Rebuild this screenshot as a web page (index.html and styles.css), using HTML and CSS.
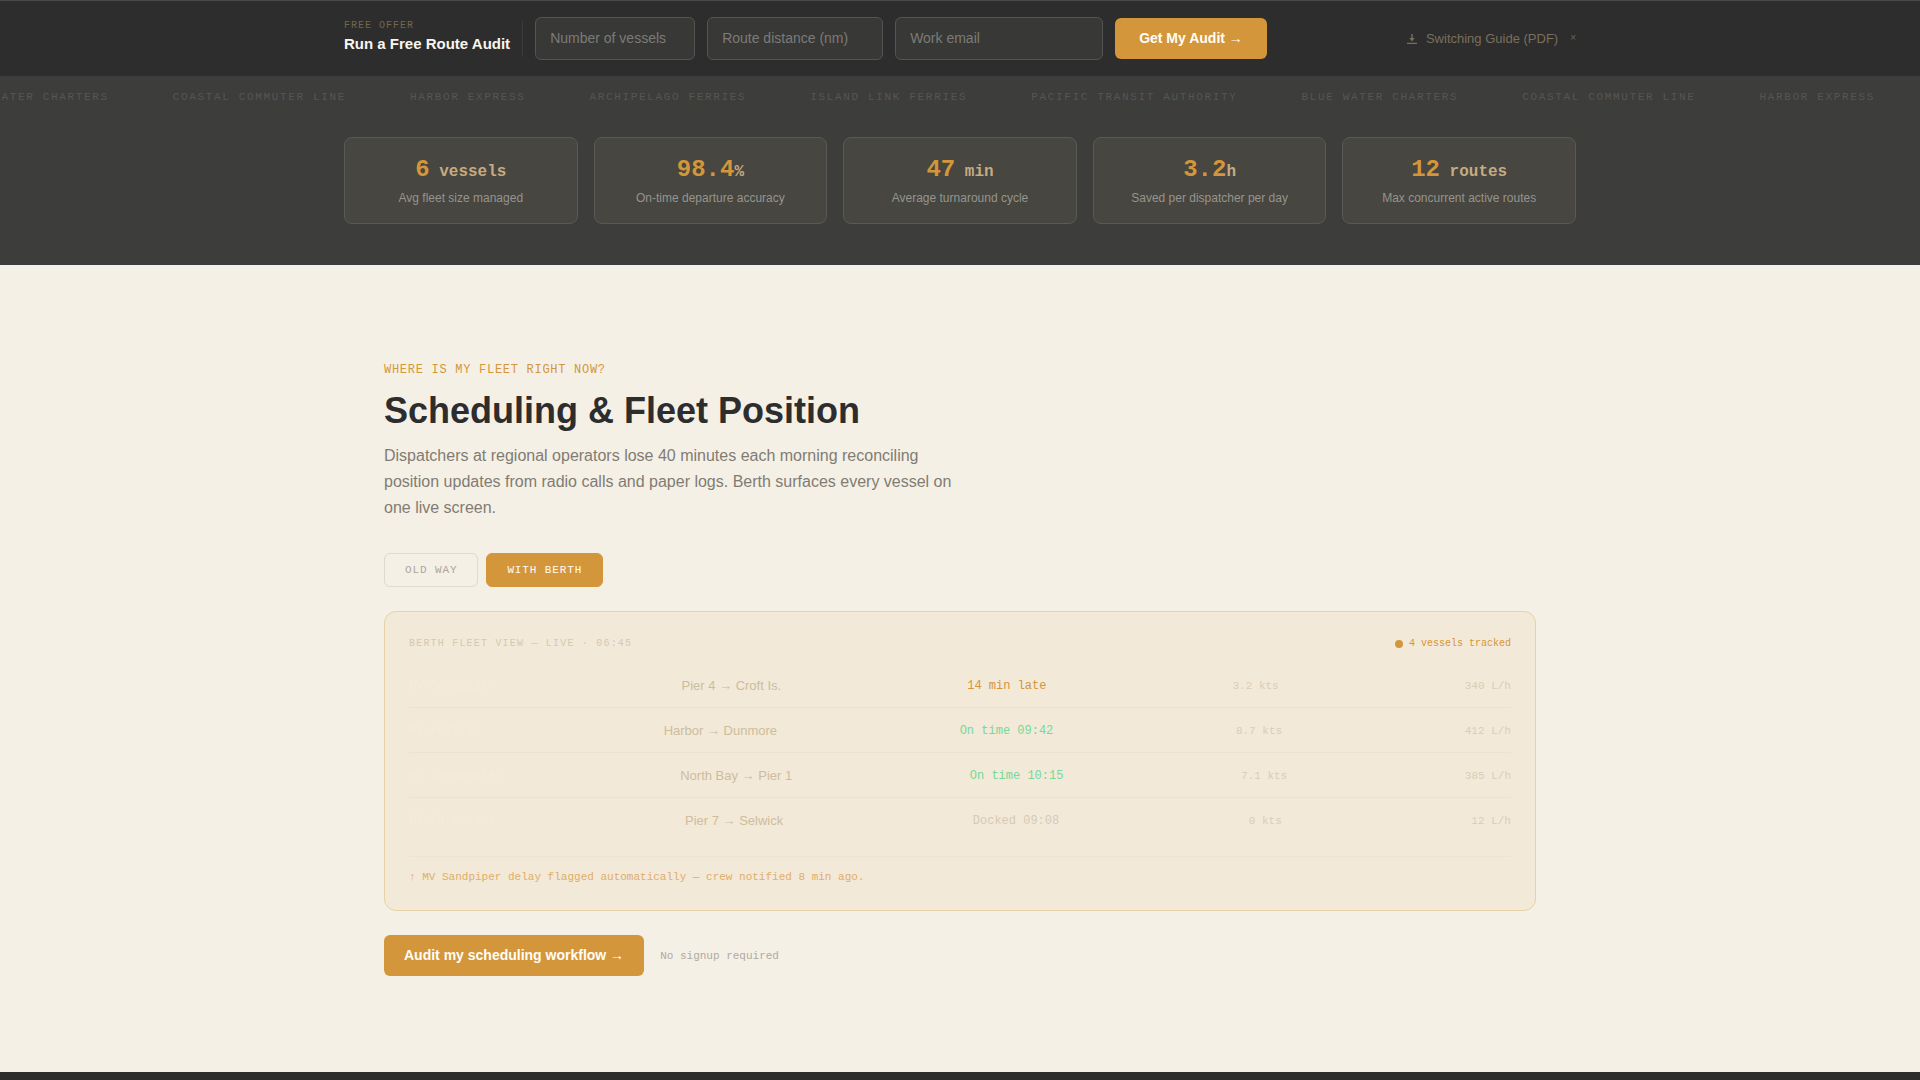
FILE: index.html
```html
<!DOCTYPE html>
<html lang="en">
<head>
  <meta charset="UTF-8">
  <title>Berth - Ferry Fleet Scheduling</title>
  <meta name="viewport" content="width=device-width, initial-scale=1.0">
  <link rel="stylesheet" href="styles.css">
</head>
<body>

  <div class="audit-bar">
    <div class="bar-inner">
      <div class="offer">
        <span class="offer-tag">FREE OFFER</span>
        <strong class="offer-title">Run a Free Route Audit</strong>
      </div>
      <form class="audit-form">
        <input class="vessels" type="text" placeholder="Number of vessels" aria-label="Number of vessels">
        <input class="distance" type="text" placeholder="Route distance (nm)" aria-label="Route distance (nm)">
        <input class="email" type="email" placeholder="Work email" aria-label="Work email">
        <button type="button" class="btn btn-audit">Get My Audit →</button>
      </form>
      <div class="bar-side">
        <a href="#" class="guide">
          <svg width="12" height="12" viewBox="0 0 12 12" fill="currentColor">
            <path d="M5.300 1h1.400v4h2L6 8.500 3.300 5h2zM1 9.800h10v1.200H1z"/>
          </svg>
          Switching Guide (PDF)
        </a>
        <button type="button" class="close" aria-label="Dismiss">×</button>
      </div>
    </div>
  </div>

  <section class="proof">
    <div class="ticker">
      <span>BLUE WATER CHARTERS</span>
      <span>COASTAL COMMUTER LINE</span>
      <span>HARBOR EXPRESS</span>
      <span>ARCHIPELAGO FERRIES</span>
      <span>ISLAND LINK FERRIES</span>
      <span>PACIFIC TRANSIT AUTHORITY</span>
      <span>BLUE WATER CHARTERS</span>
      <span>COASTAL COMMUTER LINE</span>
      <span>HARBOR EXPRESS</span>
    </div>
    <div class="stats">
      <div class="stat">
        <div class="stat-value">6<span> vessels</span></div>
        <div class="stat-label">Avg fleet size managed</div>
      </div>
      <div class="stat">
        <div class="stat-value">98.4<span>%</span></div>
        <div class="stat-label">On-time departure accuracy</div>
      </div>
      <div class="stat">
        <div class="stat-value">47<span> min</span></div>
        <div class="stat-label">Average turnaround cycle</div>
      </div>
      <div class="stat">
        <div class="stat-value">3.2<span>h</span></div>
        <div class="stat-label">Saved per dispatcher per day</div>
      </div>
      <div class="stat">
        <div class="stat-value">12<span> routes</span></div>
        <div class="stat-label">Max concurrent active routes</div>
      </div>
    </div>
  </section>

  <section class="feature">
    <p class="eyebrow">WHERE IS MY FLEET RIGHT NOW?</p>
    <h2>Scheduling &amp; Fleet Position</h2>
    <p class="lead">Dispatchers at regional operators lose 40 minutes each morning reconciling position updates from radio calls and paper logs. Berth surfaces every vessel on one live screen.</p>

    <div class="tabs">
      <button type="button" class="tab">OLD WAY</button>
      <button type="button" class="tab active">WITH BERTH</button>
    </div>

    <div class="panel">
      <div class="panel-head">
        <span class="panel-title">BERTH FLEET VIEW — LIVE · 06:45</span>
        <span class="tracked"><i class="dot"></i>4 vessels tracked</span>
      </div>
      <table class="fleet">
        <tbody>
          <tr>
            <td class="name">MV Sandpiper</td>
            <td class="route">Pier 4 → Croft Is.</td>
            <td class="status late">14 min late</td>
            <td class="meta">3.2 kts</td>
            <td class="meta">340 L/h</td>
          </tr>
          <tr>
            <td class="name">MV Kestrel</td>
            <td class="route">Harbor → Dunmore</td>
            <td class="status ontime">On time 09:42</td>
            <td class="meta">8.7 kts</td>
            <td class="meta">412 L/h</td>
          </tr>
          <tr>
            <td class="name">MV Shearwater</td>
            <td class="route">North Bay → Pier 1</td>
            <td class="status ontime">On time 10:15</td>
            <td class="meta">7.1 kts</td>
            <td class="meta">385 L/h</td>
          </tr>
          <tr>
            <td class="name">MV Cormorant</td>
            <td class="route">Pier 7 → Selwick</td>
            <td class="status docked">Docked 09:08</td>
            <td class="meta">0 kts</td>
            <td class="meta">12 L/h</td>
          </tr>
        </tbody>
      </table>
      <p class="alert">↑ MV Sandpiper delay flagged automatically — crew notified 8 min ago.</p>
    </div>

    <div class="cta">
      <button type="button" class="btn">Audit my scheduling workflow →</button>
      <span class="cta-note">No signup required</span>
    </div>
  </section>

  <section class="next"></section>

</body>
</html>
```
FILE: styles.css
```css
* {
  box-sizing: border-box;
}

body {
  margin: 0;
  font-family: "Liberation Sans", Arial, sans-serif;
  background-color: #f5f0e6;
  color: #2d2d2d;
  min-height: 100vh;
  display: flex;
  flex-direction: column;
}

p, h2 {
  margin: 0;
}

button, input {
  font-family: inherit;
}

.audit-bar {
  background-color: #2d2d2d;
  border-top: 1px solid #484846;
}

.bar-inner {
  max-width: 1280px;
  margin: 0 auto;
  padding: 16px 24px;
  display: flex;
  align-items: center;
  gap: 12px;
}

.offer {
  display: flex;
  flex-direction: column;
  gap: 4px;
  padding: 0 12px 4px 0;
  border-right: 1px solid #3c3c3a;
}

.offer-tag {
  font-family: "Liberation Mono", monospace;
  font-size: 10px;
  line-height: 10px;
  letter-spacing: 1px;
  color: #75664c;
}

.offer-title {
  font-size: 15px;
  line-height: 18px;
  color: #f9f6ef;
}

.audit-form {
  display: flex;
  align-items: center;
  gap: 12px;
}

.audit-form input {
  height: 43px;
  padding: 0 14px 2px;
  font-size: 14px;
  color: #f5f0e6;
  background-color: #383836;
  border: 1px solid #545450;
  border-radius: 6px;
}

.audit-form input::placeholder {
  color: #7c7b77;
}

.vessels {
  width: 160px;
}

.distance {
  width: 176px;
}

.email {
  width: 208px;
}

.btn {
  height: 41px;
  padding: 0 20px 1px;
  font-size: 14px;
  font-weight: bold;
  color: #fffdf8;
  background-color: #d4963a;
  border: none;
  border-radius: 6px;
  cursor: pointer;
}

.btn-audit {
  padding: 0 24px 1px;
}

.bar-side {
  margin-left: auto;
  display: flex;
  align-items: center;
  gap: 12px;
}

.guide {
  display: flex;
  align-items: center;
  gap: 8px;
  font-size: 13px;
  color: #79705c;
  text-decoration: none;
}

.close {
  padding: 0 0 2px;
  font-size: 10px;
  color: #666660;
  background: none;
  border: none;
  cursor: pointer;
}

.proof {
  background-color: #3d3d3c;
  padding: 14px 0 41px;
}

/* ticker runs off both edges of the page */
.ticker {
  display: flex;
  gap: 64px;
  margin-left: -48px;
  overflow: hidden;
  white-space: nowrap;
  font-family: "Liberation Mono", monospace;
  font-size: 11px;
  line-height: 14px;
  letter-spacing: 0.15em;
  color: #565653;
}

.stats {
  width: 100%;
  max-width: 1280px;
  margin: 33px auto 0;
  padding: 0 24px;
  display: grid;
  grid-template-columns: repeat(5, 1fr);
  gap: 16px;
}

.stat {
  padding: 16px;
  text-align: center;
  background-color: #474640;
  border: 1px solid #5a5a54;
  border-radius: 8px;
}

.stat-value {
  font-family: "Liberation Mono", monospace;
  font-size: 24px;
  line-height: 32px;
  font-weight: bold;
  color: #d4963a;
}

.stat-value span {
  font-size: 16px;
  line-height: 16px;
  color: #c6ab82;
}

.stat-label {
  margin-top: 3px;
  font-size: 12px;
  line-height: 18px;
  color: #96948e;
}

.feature {
  width: 100%;
  max-width: 1200px;
  margin: 0 auto;
  padding: 96px 24px;
}

.eyebrow {
  font-family: "Liberation Mono", monospace;
  font-size: 12px;
  line-height: 18px;
  letter-spacing: 0.06em;
  color: #d4963a;
}

h2 {
  margin-top: 10px;
  font-size: 36px;
  line-height: 44px;
}

.lead {
  max-width: 580px;
  margin-top: 10px;
  font-size: 16px;
  line-height: 26px;
  color: #817c73;
}

.tabs {
  display: flex;
  gap: 8px;
  margin-top: 32px;
}

.tab {
  height: 34px;
  padding: 0 20px;
  font-family: "Liberation Mono", monospace;
  font-size: 11px;
  letter-spacing: 0.08em;
  color: #aaa69c;
  background: none;
  border: 1px solid #dfdacf;
  border-radius: 6px;
  cursor: pointer;
}

.tab.active {
  color: #fffdf8;
  background-color: #d4963a;
  border-color: #d4963a;
}

.panel {
  margin-top: 24px;
  padding: 24px;
  background-color: #f2e9d9;
  border: 1px solid #e7d2a5;
  border-radius: 12px;
}

.panel-head {
  display: flex;
  justify-content: space-between;
  align-items: center;
  font-family: "Liberation Mono", monospace;
  font-size: 10px;
  line-height: 15px;
}

.panel-title {
  letter-spacing: 0.12em;
  color: #d5c8b1;
}

.tracked {
  display: flex;
  align-items: center;
  gap: 6px;
  color: #d4963a;
}

.dot {
  width: 8px;
  height: 8px;
  border-radius: 50%;
  background-color: #d4963a;
}

.fleet {
  display: block;
  margin-top: 12px;
}

.fleet tbody {
  display: block;
}

.fleet tr {
  display: flex;
  justify-content: space-between;
  align-items: center;
  padding: 13px 0 11px;
  border-bottom: 1px solid #ebe2d2;
}

.fleet tr:last-child {
  border-bottom: none;
}

.fleet td {
  padding: 0;
  line-height: 20px;
  font-family: "Liberation Mono", monospace;
  font-size: 12px;
}

.fleet .name {
  color: #f4ecde;
}

.fleet .route {
  font-family: "Liberation Sans", Arial, sans-serif;
  font-size: 13px;
  color: #cdbd9c;
}

.fleet .late {
  color: #d4963a;
}

.fleet .ontime {
  color: #76d996;
}

.fleet .docked {
  color: #d6cab4;
}

.fleet .meta {
  font-size: 11px;
  color: #d9cdb8;
}

.alert {
  margin-top: 14px;
  padding-top: 12px;
  border-top: 1px solid #ece3d4;
  font-family: "Liberation Mono", monospace;
  font-size: 11px;
  line-height: 17px;
  color: #dfae68;
}

.cta {
  display: flex;
  align-items: center;
  gap: 16px;
  margin-top: 24px;
}

.cta-note {
  font-family: "Liberation Mono", monospace;
  font-size: 11px;
  color: #aeaaa0;
}

.next {
  flex: 1;
  background-color: #2d2d2b;
}
```
